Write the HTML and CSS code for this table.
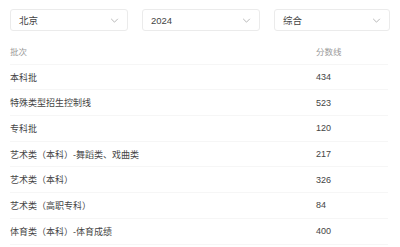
FILE: index.html
```html
<!DOCTYPE html>
<html lang="zh">
<head>
<meta charset="utf-8">
<link rel="stylesheet" href="styles.css">
</head>
<body>
<div class="page">
  <div class="filters">
    <div class="select"><span>北京</span><svg class="chev" viewBox="0 0 10 6"><path d="M1 1l4 4 4-4" fill="none" stroke="#aaa" stroke-width="1"/></svg></div>
    <div class="select"><span>2024</span><svg class="chev" viewBox="0 0 10 6"><path d="M1 1l4 4 4-4" fill="none" stroke="#aaa" stroke-width="1"/></svg></div>
    <div class="select"><span>综合</span><svg class="chev" viewBox="0 0 10 6"><path d="M1 1l4 4 4-4" fill="none" stroke="#aaa" stroke-width="1"/></svg></div>
  </div>
  <div class="table">
    <div class="row head"><span>批次</span><span>分数线</span></div>
    <div class="row"><span>本科批</span><span>434</span></div>
    <div class="row"><span>特殊类型招生控制线</span><span>523</span></div>
    <div class="row"><span>专科批</span><span>120</span></div>
    <div class="row"><span>艺术类（本科）-舞蹈类、戏曲类</span><span>217</span></div>
    <div class="row"><span>艺术类（本科）</span><span>326</span></div>
    <div class="row"><span>艺术类（高职专科）</span><span>84</span></div>
    <div class="row"><span>体育类（本科）-体育成绩</span><span>400</span></div>
  </div>
</div>
</body>
</html>
```

FILE: styles.css
```css
* { box-sizing: border-box; }
html, body { margin: 0; padding: 0; background: #fff; }
body {
  font-family: "Liberation Sans", "Noto Sans CJK SC", sans-serif;
  font-size: 9px;
  color: #444;
  overflow: hidden;
}
.page { padding: 9px 12px 0 10px; }
.filters {
  display: grid;
  grid-template-columns: 118px 118px 116px;
  column-gap: 14px;
}
.select {
  height: 22px;
  border: 1px solid #ebebeb;
  border-radius: 3px;
  display: flex;
  align-items: center;
  justify-content: space-between;
  padding: 0 8px 0 8px;
  font-size: 9.5px;
  color: #444;
}
.chev { width: 9px; height: 5px; }
.table { margin-top: 8px; }
.row {
  display: grid;
  grid-template-columns: 306px 1fr;
  height: 25.7px;
  align-items: center;
  border-bottom: 1px solid #f6f6f6;
}
.row.head { color: #999; font-size: 8.5px; }
```
